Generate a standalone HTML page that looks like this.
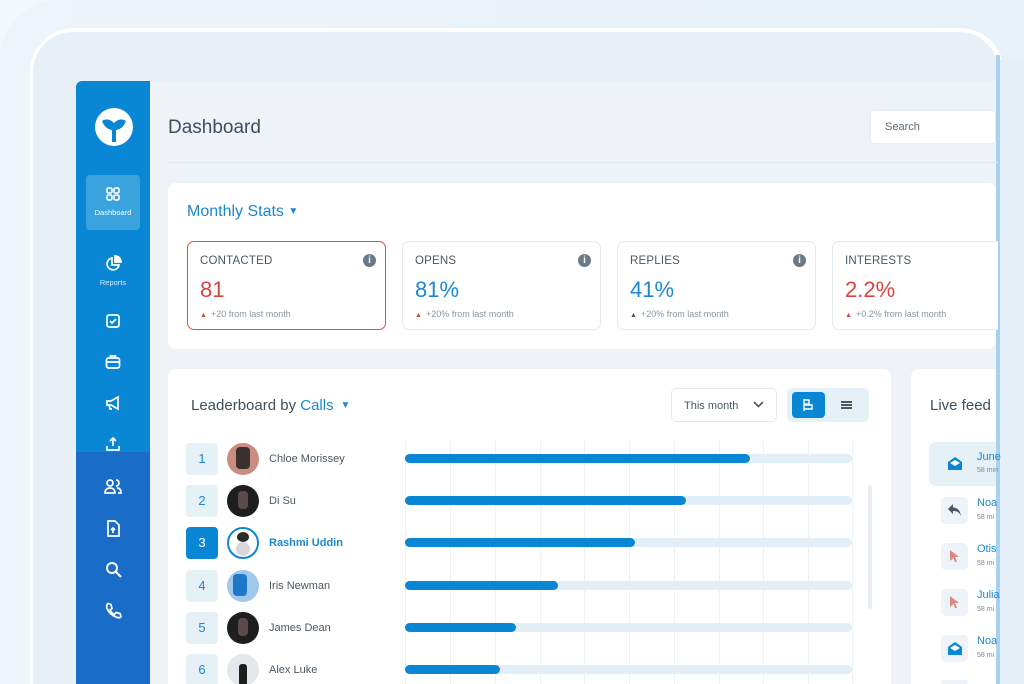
<!DOCTYPE html>
<html style="width:1024px;height:684px;overflow:hidden"><head><meta charset="utf-8"><style>
*{box-sizing:border-box;margin:0;padding:0}
body{width:1024px;height:684px;overflow:hidden;background:#f3f8fc;font-family:"Liberation Sans",sans-serif;position:relative;color:#3d4f5c}
.abs{position:absolute}
.outer{left:0;top:0;width:1024px;height:684px;border-radius:60px 0 0 0;background:linear-gradient(90deg,#eef4f9,#e6f1f9);}
.frame{left:30px;top:28px;width:974px;height:700px;border-radius:44px;background:#fff}
.inner{left:33px;top:32px;width:966px;height:700px;border-radius:40px;background:#e7f0f6}
.rightline{left:996px;top:55px;width:4px;height:640px;background:#a8d1ef}
.rightpanel{left:1000px;top:60px;width:30px;height:640px;background:#e4eff7}
.app{left:76px;top:81px;width:920px;height:603px;background:#eff3f7;overflow:hidden;border-top-left-radius:6px}
.side{left:0;top:0;width:74px;height:620px;background:#0a87d4}
.side2{left:0;top:371px;width:74px;height:260px;background:#1a6cc9}
.card{background:#fff;border-radius:8px}
.stat{border:1px solid #e3ebf1;border-radius:7px;background:#fff;width:199px;height:89px;top:241px}
.stat .l{position:absolute;left:12px;top:13px;font-size:11.5px;color:#4a5862;letter-spacing:.2px}
.stat .v{position:absolute;left:12px;top:35px;font-size:22px;color:#1a87d4}
.stat .s{position:absolute;left:12px;top:67px;font-size:9px;color:#8796a1}
.stat .s b{color:#d9443f;font-size:7px;margin-right:4px}
.stat .i{position:absolute;right:9px;top:12px;width:13px;height:13px;border-radius:50%;background:#6a7a86;color:#fff;font-size:10px;font-weight:bold;text-align:center;line-height:13px}
.num{left:186px;width:32px;height:32px;border-radius:4px;background:#e6f0f7;color:#1a87d4;font-size:13px;text-align:center;line-height:32px}
.av{left:227px;width:32px;height:32px;border-radius:50%;overflow:hidden}
.nm{left:269px;font-size:11px;color:#4a5862}
.track{left:405px;width:447px;height:9px;border-radius:5px;background:#e4eef6}
.fill{left:405px;height:9px;border-radius:5px;background:#0a87d4}
.gl{top:441px;width:1px;height:243px;background:#edf2f6}
.fi{left:941px;width:27px;height:27px;border-radius:5px;background:#edf3f8}
.fn{left:977px;font-size:11px;color:#1a87d4}
.ft{left:977px;font-size:7px;color:#7a8893}
</style></head><body>
<div class="abs outer"></div>
<div class="abs frame"></div>
<div class="abs inner"></div>
<div class="abs rightpanel"></div>
<div class="abs app">
 <div class="abs side"></div><div class="abs side2"></div>
 <svg class="abs" style="left:19px;top:27px" width="38" height="38" viewBox="0 0 38 38"><circle cx="19" cy="19" r="19" fill="#fff"/><path d="M7 13 Q13 9 19 15 Q25 9 31 13 Q28 21 21 22 L21 34 L17 34 L17 22 Q10 21 7 13Z" fill="#0a87d4"/></svg>
 <div class="abs" style="left:10px;top:94px;width:54px;height:55px;border-radius:4px;background:#3aa3de"></div>
 <svg class="abs" style="left:29px;top:105px" width="16" height="16" viewBox="0 0 16 16" fill="none" stroke="#fff" stroke-width="1.6"><rect x="2" y="2" width="5" height="5" rx="1.5"/><rect x="9" y="2" width="5" height="5" rx="1.5"/><rect x="2" y="9" width="5" height="5" rx="1.5"/><rect x="9" y="9" width="5" height="5" rx="1.5"/></svg>
 <div class="abs" style="left:10px;top:127px;width:54px;text-align:center;font-size:7.5px;color:#fff">Dashboard</div>
 <svg class="abs" style="left:29px;top:174px" width="17" height="17" viewBox="0 0 17 17" fill="none" stroke="#fff" stroke-width="1.7"><path d="M7 3 A6 6 0 1 0 14 10 L7 10Z"/><path d="M10 1 A6 6 0 0 1 16 7 L10 7Z" fill="#fff"/></svg>
 <div class="abs" style="left:10px;top:197px;width:54px;text-align:center;font-size:7.5px;color:#d7ecf9">Reports</div>
 <svg class="abs" style="left:29px;top:232px" width="16" height="16" viewBox="0 0 16 16" fill="none" stroke="#fff" stroke-width="1.7"><rect x="2" y="2" width="12" height="12" rx="2"/><path d="M5 8 L7 10 L11 6"/></svg>
 <svg class="abs" style="left:29px;top:273px" width="16" height="16" viewBox="0 0 16 16" fill="none" stroke="#fff" stroke-width="1.7"><rect x="1.5" y="4" width="13" height="10" rx="2"/><path d="M5.5 4V2h5v2M1.5 8h13"/></svg>
 <svg class="abs" style="left:29px;top:314px" width="17" height="16" viewBox="0 0 17 16" fill="none" stroke="#fff" stroke-width="1.7"><path d="M2 6h4l7-4v12l-7-4H2z M4 10l1 4h2"/></svg>
 <svg class="abs" style="left:29px;top:355px" width="16" height="16" viewBox="0 0 16 16" fill="none" stroke="#fff" stroke-width="1.7"><path d="M8 10V2M5 5l3-3 3 3M2 10v4h12v-4"/></svg>
 <svg class="abs" style="left:28px;top:397px" width="18" height="17" viewBox="0 0 18 17" fill="none" stroke="#fff" stroke-width="1.7"><circle cx="6" cy="5" r="3"/><path d="M1 15c0-4 3-5 5-5s5 1 5 5z"/><path d="M12 2a3 3 0 0 1 0 6M13 10c2 0 4 1 4 5h-3"/></svg>
 <svg class="abs" style="left:30px;top:439px" width="14" height="17" viewBox="0 0 14 17" fill="none" stroke="#fff" stroke-width="1.7"><path d="M2 1h7l4 4v11H2z"/><path d="M7 13V8M5 10l2-2 2 2"/></svg>
 <svg class="abs" style="left:29px;top:480px" width="17" height="17" viewBox="0 0 17 17" fill="none" stroke="#fff" stroke-width="2"><circle cx="7" cy="7" r="5"/><path d="M11 11l5 5"/></svg>
 <svg class="abs" style="left:29px;top:521px" width="17" height="17" viewBox="0 0 17 17" fill="none" stroke="#fff" stroke-width="1.7"><path d="M3 1.5l3 1 1 4-2 1.5c1 2 2.5 3.5 4.5 4.5l1.5-2 4 1 1 3c-1 1.5-3 1.5-5 .5C6 13 3.5 10 2 6.5 1.5 4.5 1.5 2.5 3 1.5z"/></svg>
</div>
<div class="abs rightline"></div>
<div class="abs" style="left:168px;top:117px;font-size:19px;color:#3d4f5c">Dashboard</div>
<div class="abs" style="left:168px;top:162px;width:830px;height:1px;background:#e0e8ee"></div>
<div class="abs" style="left:870px;top:110px;width:126px;height:34px;background:#fff;border-radius:4px;border:1px solid #e6edf2;font-size:11px;color:#5a6a75;padding:10px 14px">Search</div>
<div class="abs card" style="left:168px;top:183px;width:828px;height:166px"></div>
<div class="abs" style="left:187px;top:203px;font-size:16px;color:#1a87d4">Monthly Stats <span style="font-size:10px;vertical-align:2px">▼</span></div>
<div class="abs stat" style="left:187px;border:1.5px solid #d9524c"><div class="l">CONTACTED</div><div class="v" style="color:#d9443f">81</div><div class="s"><b>▲</b>+20 from last month</div><div class="i">i</div></div>
<div class="abs stat" style="left:402px"><div class="l">OPENS</div><div class="v">81%</div><div class="s"><b>▲</b>+20% from last month</div><div class="i">i</div></div>
<div class="abs stat" style="left:617px"><div class="l">REPLIES</div><div class="v">41%</div><div class="s"><b style="color:#4a5862">▲</b>+20% from last month</div><div class="i">i</div></div>
<div class="abs stat" style="left:832px;width:166px;border-right:none;border-radius:7px 0 0 7px"><div class="l">INTERESTS</div><div class="v" style="color:#d9443f">2.2%</div><div class="s"><b>▲</b>+0.2% from last month</div></div>
<div class="abs card" style="left:168px;top:369px;width:723px;height:330px"></div>
<div class="abs" style="left:191px;top:397px;font-size:15px;color:#3d4f5c">Leaderboard by <span style="color:#1a87d4">Calls</span> <span style="color:#1a87d4;font-size:10px;vertical-align:2px">&nbsp;▼</span></div>
<div class="abs" style="left:671px;top:388px;width:106px;height:34px;border:1px solid #e3ebf1;border-radius:5px;font-size:11px;color:#4a5862;padding:11px 12px">This month</div>
<svg class="abs" style="left:752px;top:399px" width="13" height="10" viewBox="0 0 13 10" fill="none" stroke="#4a5862" stroke-width="1.6"><path d="M2 3l4.5 4.5L11 3"/></svg>
<div class="abs" style="left:787px;top:388px;width:82px;height:34px;border-radius:5px;background:#e6f0f7"></div>
<div class="abs" style="left:792px;top:392px;width:33px;height:26px;border-radius:4px;background:#0a87d4"></div>
<svg class="abs" style="left:802px;top:398px" width="13" height="14" viewBox="0 0 13 14" fill="none" stroke="#fff" stroke-width="1.4"><path d="M2 1v12M2 2h5v4H2M2 7h8v4H2"/></svg>
<svg class="abs" style="left:840px;top:400px" width="13" height="10" viewBox="0 0 13 10" fill="#4a5862"><rect x="1" y="1" width="11" height="2"/><rect x="1" y="4" width="11" height="2"/><rect x="1" y="7" width="11" height="2"/></svg>
<div class="abs gl" style="left:405px"></div><div class="abs gl" style="left:450px"></div><div class="abs gl" style="left:495px"></div><div class="abs gl" style="left:540px"></div><div class="abs gl" style="left:584px"></div><div class="abs gl" style="left:629px"></div><div class="abs gl" style="left:674px"></div><div class="abs gl" style="left:719px"></div><div class="abs gl" style="left:763px"></div><div class="abs gl" style="left:808px"></div><div class="abs gl" style="left:852px"></div>
<div class="abs" style="left:868px;top:485px;width:4px;height:124px;border-radius:2px;background:#e8eff4"></div>

<div class="abs num" style="top:443px">1</div><div class="abs av" style="top:443px;background:#c98c7e"><div style="margin:4px 0 0 9px;width:14px;height:22px;background:#3a3030;border-radius:4px"></div></div><div class="abs nm" style="top:453px">Chloe Morissey</div>
<div class="abs track" style="top:454px"></div><div class="abs fill" style="top:454px;width:345px"></div>
<div class="abs num" style="top:485px">2</div><div class="abs av" style="top:485px;background:#1e1e1e"><div style="margin:6px 0 0 11px;width:10px;height:18px;background:#5a4a48;border-radius:4px"></div></div><div class="abs nm" style="top:495px">Di Su</div>
<div class="abs track" style="top:496px"></div><div class="abs fill" style="top:496px;width:281px"></div>
<div class="abs num" style="top:527px;background:#0a87d4;color:#fff">3</div><div class="abs av" style="top:527px;background:#fff;border:2px solid #0a87d4"><div style="margin:3px 0 0 8px;width:12px;height:10px;background:#2a2a2a;border-radius:50%"></div><div style="margin:0 0 0 7px;width:14px;height:14px;background:#d8d6d8;border-radius:50%"></div></div><div class="abs nm" style="top:537px;color:#1a87d4;font-weight:bold">Rashmi Uddin</div>
<div class="abs track" style="top:538px"></div><div class="abs fill" style="top:538px;width:230px"></div>
<div class="abs num" style="top:570px">4</div><div class="abs av" style="top:570px;background:#9fc8ea"><div style="margin:4px 0 0 6px;width:14px;height:22px;background:#1f77c9;border-radius:4px"></div></div><div class="abs nm" style="top:580px">Iris Newman</div>
<div class="abs track" style="top:581px"></div><div class="abs fill" style="top:581px;width:153px"></div>
<div class="abs num" style="top:612px">5</div><div class="abs av" style="top:612px;background:#1e1e1e"><div style="margin:6px 0 0 11px;width:10px;height:18px;background:#5a4a48;border-radius:4px"></div></div><div class="abs nm" style="top:622px">James Dean</div>
<div class="abs track" style="top:623px"></div><div class="abs fill" style="top:623px;width:111px"></div>
<div class="abs num" style="top:654px">6</div><div class="abs av" style="top:654px;background:#e4e8ec"><div style="margin:10px 0 0 12px;width:8px;height:22px;background:#1e1e1e;border-radius:3px"></div></div><div class="abs nm" style="top:664px">Alex Luke</div>
<div class="abs track" style="top:665px"></div><div class="abs fill" style="top:665px;width:95px"></div>
<div class="abs card" style="left:911px;top:369px;width:85px;height:330px;border-radius:8px 0 0 8px"></div>
<div class="abs" style="left:930px;top:397px;font-size:15px;color:#3d4f5c">Live feed</div>
<div class="abs" style="left:929px;top:442px;width:67px;height:44px;border-radius:7px 0 0 7px;background:#e6f0f7"></div>
<svg class="abs" style="left:947px;top:456px" width="16" height="15" viewBox="0 0 16 15"><path d="M1 6 L8 1 L15 6 V14 H1Z" fill="#0a87d4"/><path d="M3 7 L8 4 L13 7 L8 10Z" fill="#fff"/></svg>
<div class="abs fn" style="top:451px">June</div><div class="abs ft" style="top:467px">58 min</div>
<div class="abs fi" style="top:497px"></div><svg class="abs" style="left:947px;top:503px" width="15" height="14" viewBox="0 0 15 14"><path d="M6 1 L1 6 L6 11 V8 C10 8 12 9 14 13 C13 7 10 4.5 6 4.5Z" fill="#4a5862"/></svg>
<div class="abs fn" style="top:497px">Noa</div><div class="abs ft" style="top:514px">58 mi</div>
<div class="abs fi" style="top:543px"></div><svg class="abs" style="left:949px;top:549px" width="11" height="14" viewBox="0 0 11 14"><path d="M1 1 L10 8 L6 8 L8 13 L6 13 L4.5 9 L1 12Z" fill="#d98a80"/></svg>
<div class="abs fn" style="top:543px">Otis</div><div class="abs ft" style="top:560px">58 mi</div>
<div class="abs fi" style="top:589px"></div><svg class="abs" style="left:949px;top:595px" width="11" height="14" viewBox="0 0 11 14"><path d="M1 1 L10 8 L6 8 L8 13 L6 13 L4.5 9 L1 12Z" fill="#d98a80"/></svg>
<div class="abs fn" style="top:589px">Julia</div><div class="abs ft" style="top:606px">58 mi</div>
<div class="abs fi" style="top:635px"></div><svg class="abs" style="left:947px;top:641px" width="16" height="15" viewBox="0 0 16 15"><path d="M1 6 L8 1 L15 6 V14 H1Z" fill="#0a87d4"/><path d="M3 7 L8 4 L13 7 L8 10Z" fill="#fff"/></svg>
<div class="abs fn" style="top:635px">Noa</div><div class="abs ft" style="top:652px">58 mi</div>
<div class="abs fi" style="top:680px;height:4px"></div>
</body></html>
